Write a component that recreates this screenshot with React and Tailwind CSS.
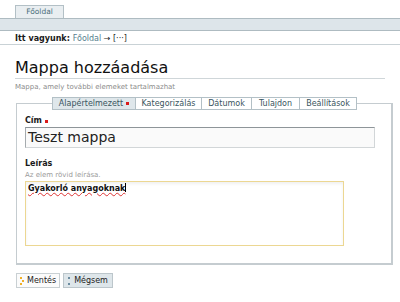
export default function App() {
  const tabs = [
    ["Alapértelmezett", "w-[84px]"],
    ["Kategorizálás", "w-[66px]"],
    ["Dátumok", "w-[50px]"],
    ["Tulajdon", "w-[48px]"],
    ["Beállítások", "w-[57px]"],
  ];
  return (
    <div className="w-[400px] h-[302px] overflow-hidden bg-white text-[#1a1a1a] font-['DejaVu_Sans',sans-serif]">
      <div className="pt-[5px]">
        <div className="ml-[15px] h-[13px] w-[49px] border border-b-0 border-[#b3c0c6] bg-[#e9eef1] text-[7.5px] leading-[12px] text-center text-[#4b6f7c]">
          Főoldal
        </div>
        <div className="h-[13px] border-y border-[#aebbc1] bg-[#dde5ea]" />
      </div>
      <div className="h-[14px] border-b border-[#c9d2d6] pl-[15px] pt-[3px] text-[8px] leading-[10px]">
        <span className="font-semibold">Itt vagyunk: </span>
        <span className="text-[#55808e]">Főoldal</span>
        <span> → [···]</span>
      </div>
      <div className="px-[15px] pt-[14px]">
        <h1 className="border-b border-[#cfd6d9] pb-[1px] text-[16px] leading-[18px] text-[#111]">Mappa hozzáadása</h1>
        <p className="mt-[4px] text-[7px] leading-[9px] text-[#8b8b8b]">Mappa, amely további elemeket tartalmazhat</p>
      </div>
      <div className="ml-[16px] mr-[7px] mt-[5px]">
        <div className="relative z-10 ml-[36px] flex h-[13px] text-[8px] leading-[12px]">
          {tabs.map(([t, w], i) => (
            <div
              key={t}
              className={
                i === 0
                  ? `${w} flex items-center justify-center gap-[3px] border border-[#b3c0c6] bg-[#dfe7eb] text-[#3a5560]`
                  : `${w} border border-l-0 border-[#b3c0c6] bg-white text-center text-[#3a5560]`
              }
            >
              {t}
              {i === 0 && <span className="inline-block h-[3px] w-[3px] bg-[#d91a1a]" />}
            </div>
          ))}
        </div>
        <div className="-mt-[7px] h-[162px] border border-[#c5ccd0] border-b-2 border-r-2 px-[8px] pt-[12px]">
          <div className="flex items-center gap-[3px] text-[8px] font-bold leading-[10px]">
            Cím <span className="inline-block h-[3px] w-[3px] bg-[#d91a1a]" />
          </div>
          <div className="mt-[1px] h-[21px] w-[350px] border border-[#d2d6d8] border-t-[#8e9599] border-l-[#a5abae] bg-[#fafafa] pl-[2px] text-[14px] leading-[19px] text-[#222]">
            Teszt mappa
          </div>
          <div className="mt-[11px] text-[8px] font-bold leading-[10px]">Leírás</div>
          <div className="mt-[2px] text-[7px] leading-[9px] text-[#9a9a9a]">Az elem rövid leírása.</div>
          <div className="mt-[1px] h-[65px] w-[319px] border border-[#ecd792] bg-white pl-[2px] text-[8px] font-bold leading-[11px] text-[#111] shadow-[inset_0_2px_3px_rgba(0,0,0,0.06)]">
            <span className="underline decoration-wavy decoration-[#d33] decoration-[0.5px]">Gyakorló anyagoknak</span>
            <span className="inline-block h-[9px] w-px translate-y-[1px] bg-black" />
          </div>
        </div>
      </div>
      <div className="ml-[16px] mt-[8px] flex gap-[3px] text-[8px] leading-[13px]">
        <div className="flex h-[15px] items-center gap-[3px] border border-[#c9d0d3] bg-[#fbfbfb] px-[3px] text-[#222]">
          <svg width="4" height="8" viewBox="0 0 4 8">
            <rect x="0" y="0" width="2" height="2" fill="#f0b028" />
            <rect x="2" y="3" width="2" height="2" fill="#f0b028" />
            <rect x="0" y="6" width="2" height="2" fill="#f0b028" />
          </svg>
          Mentés
        </div>
        <div className="flex h-[15px] items-center gap-[3px] border border-[#bcc6cb] bg-[#dee6ea] px-[4px] text-[#222]">
          <svg width="3" height="8" viewBox="0 0 3 8">
            <rect x="0" y="0" width="2" height="2" fill="#6c8ca0" />
            <rect x="0" y="6" width="2" height="2" fill="#6c8ca0" />
          </svg>
          Mégsem
        </div>
      </div>
    </div>
  );
}
